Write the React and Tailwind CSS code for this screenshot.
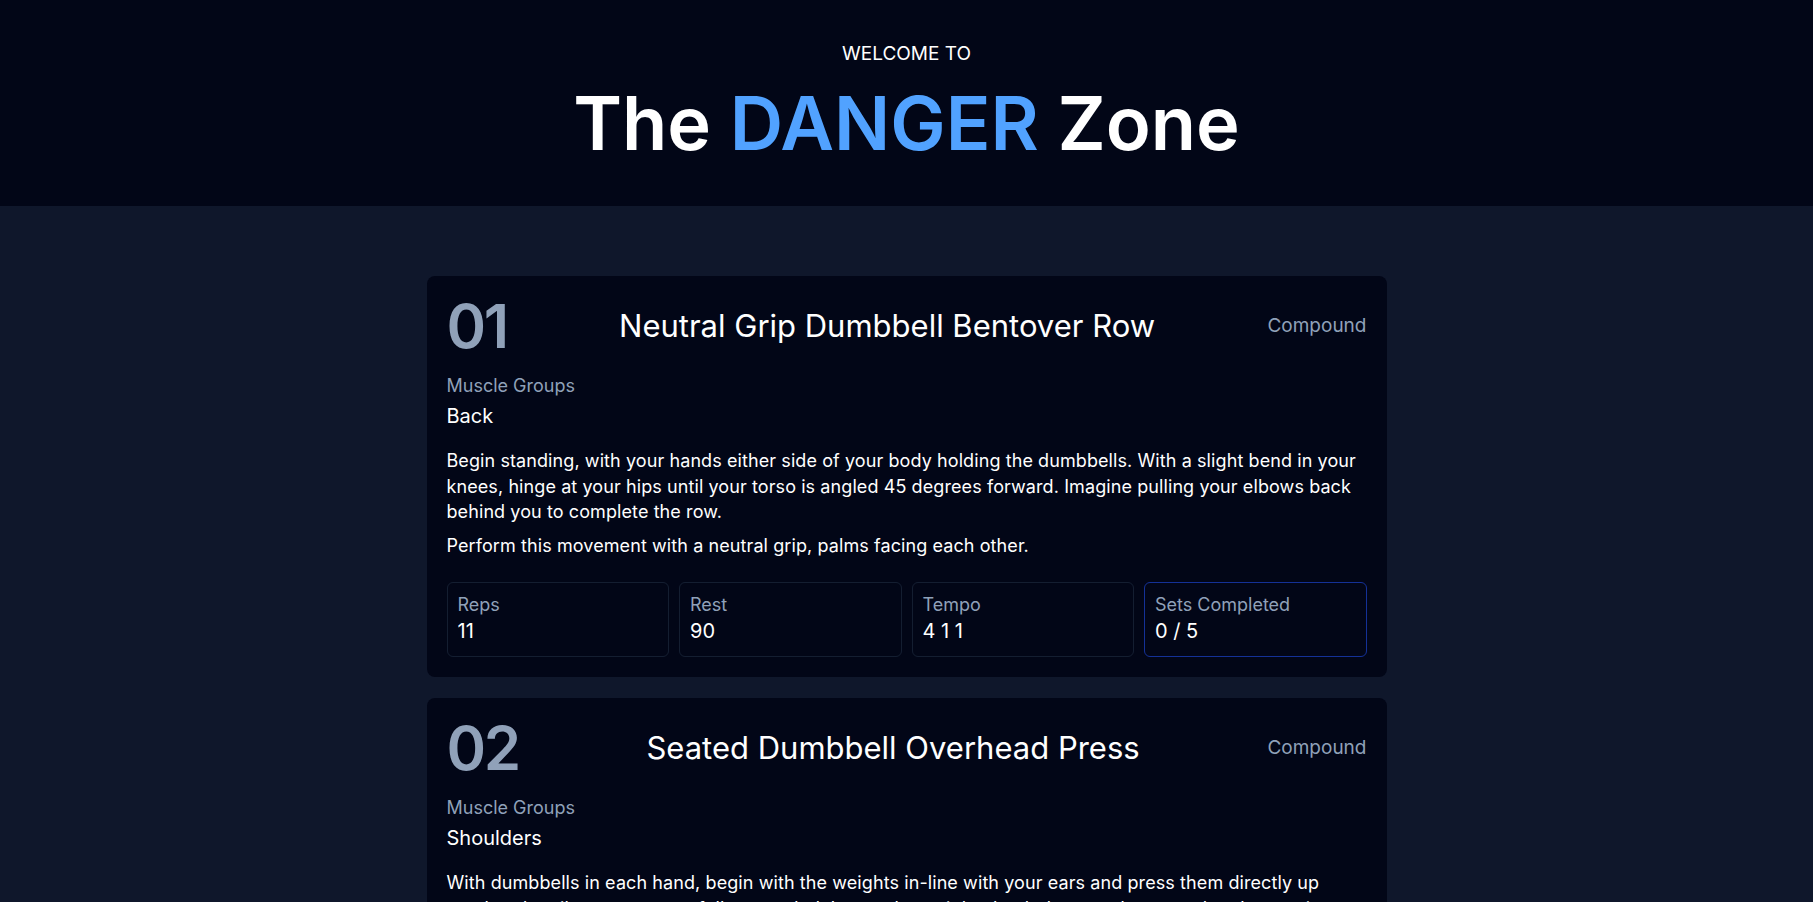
const exercises = [
  {
    number: "01",
    name: "Neutral Grip Dumbbell Bentover Row",
    type: "Compound",
    muscles: "Back",
    description: [
      "Begin standing, with your hands either side of your body holding the dumbbells. With a slight bend in your knees, hinge at your hips until your torso is angled 45 degrees forward. Imagine pulling your elbows back behind you to complete the row.",
      "Perform this movement with a neutral grip, palms facing each other.",
    ],
    reps: "11",
    rest: "90",
    tempo: "4 1 1",
    sets: 5,
  },
  {
    number: "02",
    name: "Seated Dumbbell Overhead Press",
    type: "Compound",
    muscles: "Shoulders",
    description: [
      "With dumbbells in each hand, begin with the weights in-line with your ears and press them directly up overhead until your arms are fully extended. Lower the weights back down under control to the starting position.",
    ],
    reps: "11",
    rest: "90",
    tempo: "3 1 1",
    sets: 4,
  },
  {
    number: "03",
    name: "Dumbbell Lateral Raise",
    type: "Accessory",
    muscles: "Shoulders",
    description: [
      "Stand tall with a dumbbell in each hand by your sides. Keeping a slight bend in your elbows, raise the weights out to the side until your arms are parallel with the floor, then lower slowly.",
    ],
    reps: "15",
    rest: "60",
    tempo: "2 1 2",
    sets: 3,
  },
];

function Stat({ label, value, active }) {
  return (
    <div
      className={`rounded-md border px-2.5 pt-2.5 pb-[11px] ${
        active ? "border-blue-800/80" : "border-slate-800/70"
      }`}
    >
      <p className="text-lg leading-6 text-slate-400">{label}</p>
      <p className="text-xl leading-7 text-white">{value}</p>
    </div>
  );
}

function ExerciseCard({ exercise }) {
  return (
    <div className="rounded-lg bg-[#020617] p-5">
      <div className="mb-4 flex items-center justify-between">
        <span className="text-6xl leading-none font-semibold tracking-[-0.04em] text-slate-400">
          {exercise.number}
        </span>
        <h2 className="text-[31px] leading-9 text-white">{exercise.name}</h2>
        <span className="text-[19px] leading-7 text-slate-400">{exercise.type}</span>
      </div>
      <p className="text-lg leading-7 text-slate-400">Muscle Groups</p>
      <p className="mt-0.5 text-xl leading-7 text-white">{exercise.muscles}</p>
      <div className="mt-[18px] flex flex-col gap-2">
        {exercise.description.map((text) => (
          <p className="text-lg leading-[25.6px] tracking-[0.005em] text-white" key={text}>
            {text}
          </p>
        ))}
      </div>
      <div className="mt-6 grid grid-cols-4 gap-2.5">
        <Stat label="Reps" value={exercise.reps} />
        <Stat label="Rest" value={exercise.rest} />
        <Stat label="Tempo" value={exercise.tempo} />
        <Stat label="Sets Completed" value={`0 / ${exercise.sets}`} active />
      </div>
    </div>
  );
}

export default function App() {
  return (
    <div className="min-h-screen bg-slate-900 font-['Inter',sans-serif]">
      <header className="bg-[#020617] pt-10 pb-[47px] text-center">
        <p className="text-[19px] leading-7 uppercase text-white">Welcome to</p>
        <h1 className="mt-[19px] text-[74px] leading-[72px] font-semibold text-white">
          The <span className="text-blue-400">DANGER</span> Zone
        </h1>
      </header>
      <main className="mx-auto flex max-w-240 flex-col gap-[21px] pt-[70px] pb-16">
        {exercises.map((exercise) => (
          <ExerciseCard exercise={exercise} key={exercise.number} />
        ))}
      </main>
    </div>
  );
}
